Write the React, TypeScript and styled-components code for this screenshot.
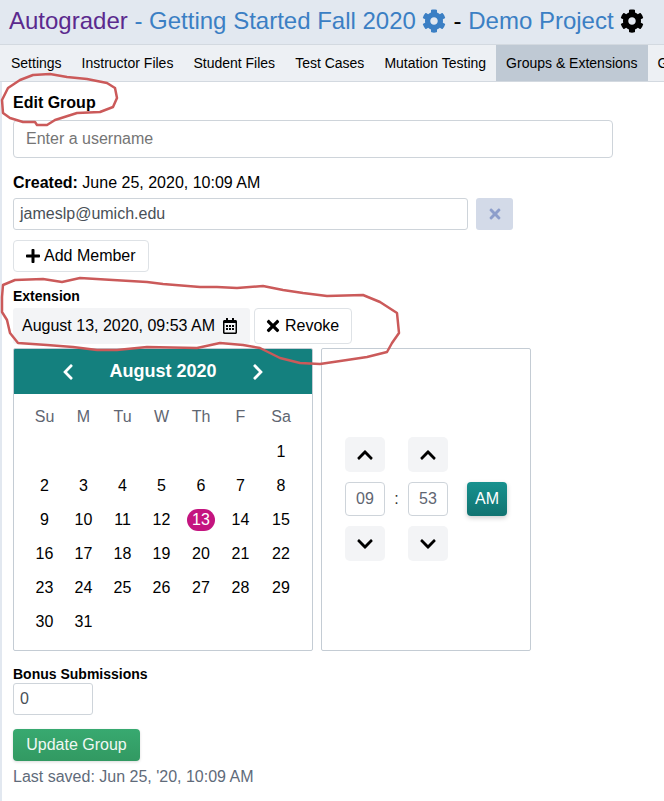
import React from 'react';
import styled, { createGlobalStyle } from 'styled-components';
import { FaCog, FaPlus, FaTimes, FaRegCalendarAlt, FaChevronLeft, FaChevronRight, FaChevronUp, FaChevronDown } from 'react-icons/fa';

const Global = createGlobalStyle`
  html, body { margin: 0; padding: 0; background: #fff; }
  body { font-family: "Liberation Sans", Arial, sans-serif; font-size: 16px; color: #000; overflow: hidden; }
  * { box-sizing: border-box; }
`;

const Page = styled.div`
  position: relative;
  width: 664px;
  height: 801px;
  overflow: hidden;
`;

const Header = styled.header`
  height: 45px;
  background: #e2e8f0;
  border-bottom: 1px solid #d3d9e0;
  padding: 7px 0 0 9px;
  font-size: 24px;
  line-height: 28px;
  white-space: nowrap;
  display: flex;
  align-items: flex-start;
`;

const Brand = styled.span`
  color: #5b2a8e;
`;

const Crumb = styled.span`
  color: #3b7fc4;
  white-space: pre;
`;

const Sep = styled.span<{ $c?: string }>`
  color: ${p => p.$c || '#000'};
  white-space: pre;
`;

const Gear = styled(FaCog)<{ $c: string }>`
  color: ${p => p.$c};
  width: 24px;
  height: 24px;
  margin: 2px 1px 0 6px;
  flex: none;
`;

const Tabs = styled.nav`
  height: 37px;
  background: #edf0f4;
  border-bottom: 1px solid #d3d9e0;
  display: flex;
  padding-left: 1px;
  white-space: nowrap;
`;

const Tab = styled.div<{ $active?: boolean }>`
  padding: 0 10px;
  font-size: 14px;
  line-height: 36px;
  flex: none;
  background: ${p => (p.$active ? '#bfc9d4' : 'transparent')};
`;

const Content = styled.main`
  border-left: 2px solid #e2e8f0;
  padding: 12px 0 0 11px;
  height: 719px;
`;

const Heading = styled.div`
  font-size: 16px;
  font-weight: 700;
  line-height: 18px;
`;

const UsernameInput = styled.div`
  width: 600px;
  height: 38px;
  margin-top: 8px;
  border: 1px solid #ced4da;
  border-radius: 4px;
  padding: 0 12px;
  line-height: 36px;
  color: #757575;
`;

const Created = styled.div`
  margin-top: 16px;
  line-height: 18px;
`;

const MemberRow = styled.div`
  display: flex;
  gap: 8px;
  margin-top: 6px;
`;

const MemberInput = styled.div`
  width: 455px;
  height: 32px;
  border: 1px solid #ced4da;
  border-radius: 3px;
  padding: 0 6px;
  line-height: 30px;
  color: #495057;
`;

const RemoveButton = styled.div`
  width: 37px;
  height: 32px;
  border-radius: 3px;
  background: #d3dae8;
  color: #8d9ecb;
  display: flex;
  align-items: center;
  justify-content: center;
`;

const AddButton = styled.div`
  display: inline-flex;
  align-items: center;
  gap: 3px;
  height: 32px;
  padding: 0 12px 0 11px;
  border: 1px solid #dee2e6;
  border-radius: 4px;
  background: #fff;
  white-space: nowrap;
`;

const AddRow = styled.div`
  margin-top: 10px;
  display: flex;
`;

const Label = styled.div<{ $mt: number }>`
  font-size: 14px;
  font-weight: 700;
  line-height: 16px;
  margin-top: ${p => p.$mt}px;
`;

const ExtensionRow = styled.div`
  display: flex;
  gap: 4px;
  margin-top: 4px;
`;

const DateBox = styled.div`
  width: 237px;
  height: 36px;
  background: #f3f4f6;
  border-radius: 3px;
  padding: 0 12px 0 9px;
  display: flex;
  align-items: center;
  justify-content: space-between;
  white-space: nowrap;
`;

const RevokeButton = styled(AddButton)`
  height: 36px;
  width: 98px;
  padding: 0 0 0 9px;
`;

const Pickers = styled.div`
  display: flex;
  gap: 8px;
  margin-top: 4px;
`;

const Calendar = styled.div`
  width: 300px;
  height: 303px;
  border: 1px solid #c4ccd4;
  border-radius: 2px;
  overflow: hidden;
`;

const CalendarHead = styled.div`
  height: 45px;
  background: #14807e;
  color: #fff;
  display: flex;
  align-items: center;
  justify-content: center;
  gap: 32px;
  font-weight: 700;
  font-size: 18px;
`;

const Days = styled.div`
  display: grid;
  grid-template-columns: 39px 39px 39px 39px 40px 39px 42px;
  grid-template-rows: 35px repeat(6, 34px);
  padding: 6px 0 0 11px;
  text-align: center;
`;

const Weekday = styled.div`
  color: #5f6672;
  line-height: 34px;
`;

const Day = styled.div`
  line-height: 34px;
  display: flex;
  align-items: center;
  justify-content: center;
`;

const Selected = styled.span`
  width: 28px;
  height: 22px;
  line-height: 22px;
  border-radius: 11px;
  background: #c4147f;
  color: #fff;
`;

const TimePanel = styled.div`
  width: 210px;
  height: 303px;
  border: 1px solid #c4ccd4;
  border-radius: 2px;
  padding: 0 0 1px 23px;
  display: flex;
  align-items: center;
`;

const TimeGrid = styled.div`
  display: grid;
  grid-template-columns: 40px 23px 40px 19px 40px;
  grid-template-rows: 35px 34px 35px;
  row-gap: 10px;
  align-items: center;
  text-align: center;
`;

const Step = styled.div`
  height: 35px;
  background: #f3f4f6;
  border-radius: 5px;
  display: flex;
  align-items: center;
  justify-content: center;
`;

const TimeValue = styled.div`
  height: 34px;
  border: 1px solid #ced4da;
  border-radius: 4px;
  line-height: 32px;
  color: #5f6672;
`;

const Colon = styled.div`
  color: #333;
`;

const AmButton = styled.div`
  height: 34px;
  border-radius: 4px;
  line-height: 34px;
  color: #fff;
  background: linear-gradient(#17918e, #117371);
  box-shadow: 0 2px 5px rgba(0, 0, 0, 0.2);
`;

const BonusInput = styled.div`
  width: 80px;
  height: 32px;
  margin-top: 1px;
  border: 1px solid #ced4da;
  border-radius: 3px;
  padding: 0 6px;
  line-height: 30px;
  color: #495057;
`;

const SaveButton = styled.div`
  width: 127px;
  height: 32px;
  margin-top: 14px;
  border-radius: 4px;
  background: linear-gradient(#38a970, #329962);
  color: #f0f8f4;
  text-align: center;
  line-height: 31px;
  box-shadow: 0 1px 3px rgba(0, 0, 0, 0.15);
`;

const Saved = styled.div`
  margin-top: 7px;
  line-height: 18px;
  color: #5f6b7a;
`;

const Scribble = styled.svg`
  position: absolute;
  left: 0;
  top: 0;
  pointer-events: none;
`;

const weeks: (number | null)[][] = [
  [null, null, null, null, null, null, 1],
  [2, 3, 4, 5, 6, 7, 8],
  [9, 10, 11, 12, 13, 14, 15],
  [16, 17, 18, 19, 20, 21, 22],
  [23, 24, 25, 26, 27, 28, 29],
  [30, 31, null, null, null, null, null],
];

export default function App() {
  return (
    <Page>
      <Global />
      <Header>
        <Brand>Autograder</Brand>
        <Sep $c="#3b7fc4"> - </Sep>
        <Crumb>Getting Started Fall 2020</Crumb>
        <Gear $c="#3b7fc4" />
        <Sep> - </Sep>
        <Crumb>Demo Project</Crumb>
        <Gear $c="#000" />
      </Header>
      <Tabs>
        <Tab>Settings</Tab>
        <Tab>Instructor Files</Tab>
        <Tab>Student Files</Tab>
        <Tab>Test Cases</Tab>
        <Tab>Mutation Testing</Tab>
        <Tab $active>Groups &amp; Extensions</Tab>
        <Tab>Grades</Tab>
      </Tabs>
      <Content>
        <Heading>Edit Group</Heading>
        <UsernameInput>Enter a username</UsernameInput>
        <Created><b>Created:</b> June 25, 2020, 10:09 AM</Created>
        <MemberRow>
          <MemberInput>jameslp@umich.edu</MemberInput>
          <RemoveButton><FaTimes size={16} /></RemoveButton>
        </MemberRow>
        <AddRow>
          <AddButton><FaPlus size={16} /> Add Member</AddButton>
        </AddRow>
        <Label $mt={16}>Extension</Label>
        <ExtensionRow>
          <DateBox>
            August 13, 2020, 09:53 AM
            <FaRegCalendarAlt size={16} />
          </DateBox>
          <RevokeButton><FaTimes size={18} /> Revoke</RevokeButton>
        </ExtensionRow>
        <Pickers>
          <Calendar>
            <CalendarHead>
              <FaChevronLeft size={18} />
              <span>August 2020</span>
              <FaChevronRight size={18} />
            </CalendarHead>
            <Days>
              {['Su', 'M', 'Tu', 'W', 'Th', 'F', 'Sa'].map(d => <Weekday key={d}>{d}</Weekday>)}
              {weeks.flat().map((d, i) => (
                <Day key={i}>{d === 13 ? <Selected>{d}</Selected> : d}</Day>
              ))}
            </Days>
          </Calendar>
          <TimePanel>
            <TimeGrid>
              <Step><FaChevronUp size={18} /></Step>
              <span />
              <Step><FaChevronUp size={18} /></Step>
              <span />
              <span />
              <TimeValue>09</TimeValue>
              <Colon>:</Colon>
              <TimeValue>53</TimeValue>
              <span />
              <AmButton>AM</AmButton>
              <Step><FaChevronDown size={18} /></Step>
              <span />
              <Step><FaChevronDown size={18} /></Step>
              <span />
              <span />
            </TimeGrid>
          </TimePanel>
        </Pickers>
        <Label $mt={15}>Bonus Submissions</Label>
        <BonusInput>0</BonusInput>
        <SaveButton>Update Group</SaveButton>
        <Saved>Last saved: Jun 25, '20, 10:09 AM</Saved>
      </Content>
      <Scribble width="664" height="801" viewBox="0 0 664 801" fill="none" stroke="#cb5a5a" strokeWidth="2.5" strokeLinejoin="round" strokeLinecap="round">
        <path d="M3 113 L2 100 L8 88 L20 80 L33 75 L50 74 L67 77 L87 79 L107 83 L115 88 L117 98 L113 107 L100 112 L77 113 L55 120 L47 125 L37 125 L35 122 L23 122 L10 118 Z" />
        <path d="M3 285 L15 280 L43 279 L62 282 L80 278 L113 280 L147 282 L163 284 L200 287 L217 287 L237 288 L263 286 L283 290 L303 293 L327 296 L363 295 L380 302 L397 313 L399 333 L392 343 L387 352 L367 357 L347 360 L320 364 L300 363 L280 358 L260 348 L243 345 L220 343 L197 348 L147 347 L117 350 L97 350 L73 347 L47 345 L18 343 L10 333 L7 320 L2 312 L2 297 Z" />
      </Scribble>
    </Page>
  );
}
